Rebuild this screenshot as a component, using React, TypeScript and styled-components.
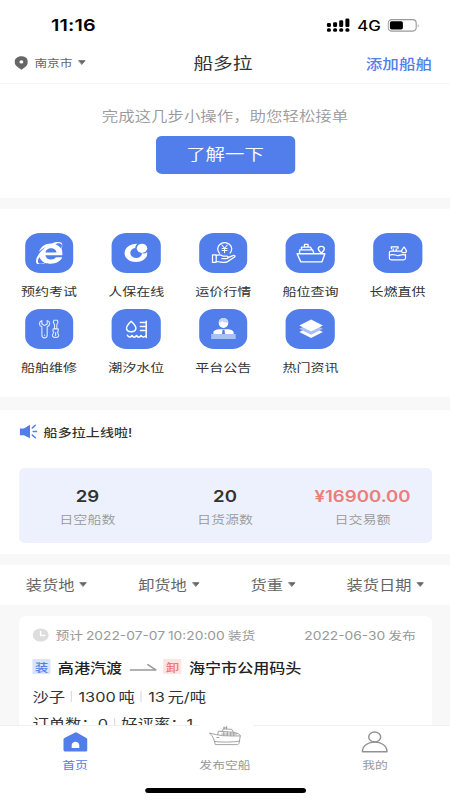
import React from 'react';
import styled, { createGlobalStyle } from 'styled-components';
import { FaInternetExplorer } from 'react-icons/fa';

const BLUE = '#517eea';

const GlobalStyle = createGlobalStyle`
  *, *::before, *::after { box-sizing: border-box; }
  html, body { margin: 0; padding: 0; background: #fff; overflow: hidden; }
`;

/* The 375pt wide design is stretched to fill the 450px viewport. */
const Screen = styled.div`
  width: 375px;
  height: 800px;
  transform: scaleX(1.2);
  transform-origin: 0 0;
  display: flex;
  flex-direction: column;
  overflow: hidden;
  background: #f8f8f8;
  color: #333;
  font-family: Inter, 'Noto Sans CJK SC', sans-serif;
  white-space: nowrap;
`;

const StatusBar = styled.div`
  flex: none;
  height: 42px;
  padding: 8px 25px 0 42.5px;
  display: flex;
  align-items: center;
  justify-content: space-between;
  background: #fff;
  color: #000;
`;
const Clock = styled.span`
  font-size: 16.5px;
  font-weight: 600;
  letter-spacing: 0.1px;
`;
const StatusRight = styled.div`
  display: flex;
  align-items: center;
`;
const Network = styled.span`
  font-size: 14px;
  font-weight: 500;
  margin: 0 6px 0 5.5px;
`;

const Header = styled.header`
  flex: none;
  height: 42px;
  padding: 0 15px 0 11.5px;
  display: grid;
  grid-template-columns: 1fr auto 1fr;
  align-items: center;
  background: #fff;
  border-bottom: 1px solid #f7f7f7;
`;
const City = styled.div`
  display: flex;
  align-items: center;
  font-size: 10.6px;
  color: #666;
`;
const CityName = styled.span`
  margin: 0 4.5px 0 5.5px;
`;
const Title = styled.h1`
  margin: 0;
  padding-bottom: 2px;
  font-size: 16.4px;
  font-weight: 400;
`;
const AddLink = styled.span`
  justify-self: end;
  font-size: 13.8px;
  font-weight: 500;
  color: ${BLUE};
`;

const Promo = styled.section`
  flex: none;
  height: 113.5px;
  padding-top: 20px;
  display: flex;
  flex-direction: column;
  align-items: center;
  background: #fff;
`;
const PromoText = styled.p`
  margin: 0 0 8px;
  font-size: 13.7px;
  line-height: 24px;
  font-weight: 350;
  color: #999;
`;
const PromoButton = styled.button`
  width: 116px;
  height: 37.5px;
  padding: 0 0 3px;
  border: 0;
  border-radius: 5px;
  background: ${BLUE};
  color: #fff;
  font-family: inherit;
  font-size: 16.2px;
  font-weight: 350;
`;

const Menu = styled.section`
  flex: none;
  height: 188px;
  margin-top: 11.5px;
  padding: 24.3px 7.4px 0 4.6px;
  display: grid;
  grid-template-columns: repeat(5, 1fr);
  grid-auto-rows: 75.8px;
  background: #fff;
`;
const MenuItem = styled.div`
  display: flex;
  flex-direction: column;
  align-items: center;
`;
const Tile = styled.div`
  width: 40.6px;
  height: 39.5px;
  border-radius: 12.5px;
  display: flex;
  align-items: center;
  justify-content: center;
  background: ${BLUE};
  color: #fff;
`;
const MenuLabel = styled.span`
  margin-top: 9px;
  font-size: 11.7px;
  line-height: 20px;
`;

const Overview = styled.section`
  flex: none;
  height: 144.5px;
  margin-top: 12.5px;
  padding: 0 15.5px;
  background: #fff;
`;
const Notice = styled.div`
  height: 58.5px;
  padding-bottom: 15px;
  display: flex;
  align-items: center;
  gap: 5px;
  font-size: 11.7px;
  font-weight: 500;
  letter-spacing: 0.05px;
`;
const Stats = styled.div`
  height: 75px;
  padding-top: 17.5px;
  border-radius: 5px;
  display: grid;
  grid-template-columns: repeat(3, 1fr);
  background: #edf1fd;
`;
const Stat = styled.div`
  display: flex;
  flex-direction: column;
  align-items: center;
`;
const StatValue = styled.span<{ $accent?: boolean }>`
  font-size: 15.5px;
  line-height: 22px;
  font-weight: 600;
  color: ${(p) => (p.$accent ? '#ec7d78' : '#333')};
`;
const StatLabel = styled.span`
  margin-top: 2.5px;
  font-size: 11.7px;
  line-height: 20px;
  font-weight: 350;
  color: #999;
`;

const Filters = styled.nav`
  flex: none;
  height: 40px;
  margin-top: 11px;
  padding: 0 21.5px 2px 21.5px;
  display: flex;
  align-items: center;
  justify-content: space-between;
  background: #fff;
  font-size: 13.5px;
  color: #666;
`;
const Filter = styled.div`
  display: flex;
  align-items: center;
  gap: 4px;
`;

const CargoCard = styled.article`
  flex: 1;
  min-height: 0;
  overflow: hidden;
  margin: 11px 15.5px 0;
  padding: 8px 13px 0 11.5px;
  border-radius: 6px 6px 0 0;
  background: #fff;
`;
const CardMeta = styled.div`
  height: 22px;
  display: flex;
  align-items: center;
  font-size: 11.5px;
  word-spacing: -0.8px;
  color: #999;
`;
const LoadTime = styled.span`
  margin-left: 5px;
  margin-right: auto;
`;
const Route = styled.div`
  height: 22px;
  margin-top: 9.5px;
  display: flex;
  align-items: center;
  font-size: 13.4px;
  font-weight: 500;
  color: #222;
`;
const RoutePlace = styled.span`
  margin-right: 6.5px;
`;
const UnloadStop = styled.span`
  margin-left: 5.5px;
  display: flex;
  align-items: center;
`;
const Tag = styled.span<{ $unload?: boolean }>`
  width: 15.2px;
  height: 15px;
  margin-right: 6px;
  display: flex;
  align-items: center;
  justify-content: center;
  font-size: 11px;
  font-weight: 500;
  color: ${(p) => (p.$unload ? '#ef7771' : BLUE)};
  background: ${(p) => (p.$unload ? '#fde3e1' : '#d9e3fb')};
`;
const Details = styled.div<{ $gap: number }>`
  height: 22px;
  margin-top: ${(p) => p.$gap}px;
  display: flex;
  align-items: center;
  font-size: 13.6px;
  word-spacing: -1.6px;
`;
const Divider = styled.i`
  width: 1px;
  height: 11px;
  margin: 0 5.1px;
  background: #ddd;
`;

const TabBar = styled.nav`
  flex: none;
  position: relative;
  height: 75.5px;
  display: grid;
  grid-template-columns: repeat(3, 1fr);
  background: #fff;
  border-top: 1px solid #f0f0f0;
`;
const Bump = styled.span`
  position: absolute;
  left: 160.5px;
  top: -14px;
  width: 54px;
  height: 54px;
  border-radius: 50%;
  background: #fff;
`;
const Tab = styled.div<{ $active?: boolean }>`
  position: relative;
  height: 49px;
  display: flex;
  flex-direction: column;
  align-items: center;
  justify-content: flex-end;
  font-size: 10.7px;
  line-height: 18px;
  color: ${(p) => (p.$active ? BLUE : '#999')};
`;
const TabIcon = styled.div`
  flex: none;
  height: 30px;
  display: flex;
  align-items: center;
`;
const ShipSlot = styled(TabIcon)`
  height: 41px;
  padding-left: 1px;
`;
const HomeIndicator = styled.span`
  position: absolute;
  left: 121px;
  bottom: 7.5px;
  width: 134px;
  height: 5px;
  border-radius: 3px;
  background: #000;
`;

/* Drawings use stretched viewport pixels, so their boxes are 1.2 times narrower. */
type ArtProps = { w: number; h: number; children: React.ReactNode };
const Art = ({ w, h, children }: ArtProps) => (
  <svg
    width={w / 1.2}
    height={h}
    viewBox={`0 0 ${w} ${h}`}
    preserveAspectRatio="none"
    fill="none"
    strokeLinecap="round"
    strokeLinejoin="round"
  >
    {children}
  </svg>
);

const Caret = () => (
  <Art w={8} h={5}><path d="M.8.600h6.400L4 4.300z" fill="#666" stroke="#666" strokeWidth=".7" /></Art>
);

const SignalIcon = () => (
  <Art w={24} h={14}>
    <g fill="#000">
      <rect x="0.5" y="5" width="4" height="4" rx="1.3" />
      <rect x="6.7" y="4.2" width="4" height="4.8" rx="1.3" />
      <rect x="12.8" y="2.2" width="4" height="6.8" rx="1.3" />
      <rect x="19" y="0.5" width="4" height="8.5" rx="1.3" />
      <rect x="0.5" y="10.3" width="4" height="3.4" rx="1.5" />
      <rect x="6.7" y="10.3" width="4" height="3.4" rx="1.5" />
      <rect x="12.8" y="10.3" width="4" height="3.4" rx="1.5" />
      <rect x="19" y="10.3" width="4" height="3.4" rx="1.5" />
    </g>
  </Art>
);

const BatteryIcon = () => (
  <Art w={32} h={13}>
    <rect x="0.6" y="0.6" width="28" height="11.5" rx="3.5" stroke="#999" strokeWidth="1.1" />
    <rect x="2.3" y="2.2" width="13" height="8.4" rx="1.8" fill="#000" />
    <path d="M30.2 4.4q1.6 2 0 4z" fill="#999" />
  </Art>
);

const PinIcon = () => (
  <Art w={14} h={14}>
    <path fillRule="evenodd" d="M7 .3c4 0 6.8 2.5 6.8 5.7S10.5 11.4 7 13.7C3.5 11.4.2 9.2.2 6S3 .3 7 .3zM7 4.2a2 1.7 0 100 3.4 2 1.7 0 000-3.4z" fill="#666" />
  </Art>
);

const InsuranceIcon = () => (
  <Art w={48} h={40}>
    <path d="M26 10.800C18.500 10.600 13 14.600 13 20.200c0 5.200 5 8.800 11.300 8.800 6 0 11.300-3.400 11.300-8.200 0-.7 0-1.100-.2-1.600-1.700 1.200-3.700 1.400-5.200 1.100.2 2.500-2.300 4.700-5.400 4.700-3.500 0-6.100-2.200-6.100-5 0-2.500 2.100-4.600 4.900-4.900C23.700 13.300 24.500 11.800 26 10.800z" fill="#fff" />
    <ellipse cx="30.400" cy="15.300" rx="5.200" ry="4.600" fill="#fff" />
  </Art>
);

const PriceIcon = () => (
  <Art w={48} h={40}>
    <g stroke="#fff" strokeWidth="1.25">
      <path d="M20.300 20.200a7 6.300 0 1110.600-.2" />
      <path d="M22.700 12l2.700 3.200 2.700-3.200M25.400 15.200v4.600M22.900 15.500h5M22.900 17.500h5" strokeWidth="1" />
      <path d="M13.300 21.800h3.700v7.500h-3.700z" />
      <path d="M17 22.500c2.500-1.100 4.600-.8 6.600.5h3.700c2.400 0 2.200 2.600 0 2.600h-4.700M28.400 24.800l5.200-2.200c1.900-.7 3 .6 1.400 1.700l-6.700 4.300c-2 1.100-4.300.9-6.200.6l-5.100-.7" />
    </g>
  </Art>
);

const ShipPositionIcon = () => (
  <Art w={48} h={40}>
    <g stroke="#fff" strokeWidth="1.35">
      <path d="M10.300 20.700h27.800l-3 8.200H14zM12.800 20.500v-3.600h13l1.300 3.700M14.700 16.700v-2.600h8.900l1.500 2.600M17.700 13.900v-2.500h3.500v2.500" />
      <path d="M34.500 20.300c-2-2-3-3.200-3-4.500 0-1.500 1.300-2.500 3-2.500s3 1 3 2.500c0 1.300-1 2.500-3 4.500z" />
    </g>
  </Art>
);

const FuelIcon = () => (
  <Art w={48} h={40}>
    <g stroke="#fff" strokeWidth="1.2">
      <path d="M27.500 18.100H18c-1.200 0-1.800.6-1.800 1.500v5.700c0 .9.600 1.500 1.800 1.500h12.500c1.200 0 1.800-.6 1.800-1.500v-4" />
      <path d="M16.300 22.200c3.200-1.500 5.100-.1 7.600.3 2.800.4 4.500-2 8.200-.4M18.200 15.700v-1.800h6.500v1.800M20 15.800v2M23 15.800v2M18 13.900h7" />
      <path d="M30.800 14c1.600 2 2.400 2.800 2.400 3.900 0 1-1 1.800-2.400 1.800s-2.400-.8-2.400-1.800c0-1.100.8-1.900 2.400-3.900z" />
    </g>
  </Art>
);

const RepairIcon = () => (
  <Art w={48} h={40}>
    <g stroke="#dce5fd" strokeWidth="1.15">
      <path d="M16.700 11.500c-3.300 1.500-3.300 5 0 6.300v8.500c0 3.400 5.300 3.400 5.300 0v-8.500c3.300-1.500 3.300-5 0-6.300v3.600l-2.600 1.300-2.700-1.300z" />
      <path d="M19.400 26v.3M28.700 11.200h3.500l.6 2.300-1.200 2v4.100h-2.300v-4.100l-1.200-2zM28 19.800h5v2.300l-.8 1 1.300 3.300c.4 2.700-6.700 2.700-6.300 0l1.300-3.300-.8-1zM30.400 23.500v3" />
    </g>
  </Art>
);

const TideIcon = () => (
  <Art w={48} h={40}>
    <g stroke="#fff" strokeWidth="1.5">
      <path d="M19.600 12.200c3.200 3 4.700 4.900 4.700 6.900 0 2.200-2 3.700-4.700 3.700s-4.700-1.500-4.700-3.700c0-2 1.500-3.900 4.700-6.900zM34.600 12.300v16.300M28.800 13.500h5.700M28.800 17.500h5.700M28.800 21.500h5.700" />
      <path d="M15.700 26.200c1.500 2.500 3.200 2.500 4.700.3 1.500 2.200 3 2.200 4.500 0 1.500 2.200 3 2.200 4.500 0 1.200 1.900 3 2.200 5 .3" />
    </g>
  </Art>
);

const BulletinIcon = () => (
  <Art w={48} h={40}>
    <ellipse cx="24.300" cy="14" rx="4.800" ry="5" fill="#fff" />
    <path d="M19.500 13.500c0-6 9.600-6 9.600 0-2.700.4-4.700-.2-6-1.300-.8 1-2 1.400-3.600 1.300z" fill="#c5d4fa" />
    <path d="M14.200 25v-1.500c0-2 2.500-3.300 6.800-3.300h6.600c4.300 0 6.800 1.300 6.800 3.300V25z" fill="#fff" />
    <path d="M23.300 20.800h2l.5 4.200h-3z" fill={BLUE} />
    <rect x="12" y="25" width="24.500" height="5" fill="#a9c0f7" />
  </Art>
);

const LayersIcon = () => (
  <Art w={48} h={40}>
    <path d="M12.500 23l11.800-6 11.800 6-11.800 6z" fill="#fff" />
    <path d="M12.500 19.800l11.800-6 11.800 6-11.800 6z" fill="#a9c0f7" />
    <path d="M12.500 16.600l11.800-6 11.800 6-11.800 6z" fill="#fff" />
  </Art>
);

const HornIcon = () => (
  <Art w={19} h={15}>
    <path d="M.7 4.600h4L10.800.700v13.600L4.700 11.200h-4z" fill={BLUE} />
    <path d="M13.100 3.900l3-2.600M14 7.500h3.800M13.100 11.100l3 2.600" stroke={BLUE} strokeWidth="1.5" />
  </Art>
);

const ClockIcon = () => (
  <Art w={17} h={14}>
    <ellipse cx="8.300" cy="7" rx="8" ry="6.600" fill="#ddd" />
    <path d="M8.200 3.500v4h4" stroke="#fff" strokeWidth="1.5" />
  </Art>
);

const RouteArrow = () => (
  <Art w={27} h={10}>
    <path d="M.5 7.900h25.700l-8-5.200" stroke="#999" strokeWidth="1.500" />
  </Art>
);

const HouseIcon = () => (
  <Art w={26} h={20}>
    <path fillRule="evenodd" d="M12.800.5q.8-.3 1.500 0L24 5.900c.7.400 1 .9 1 1.600v10.200c0 1.100-.7 1.800-1.900 1.800H3c-1.200 0-1.900-.7-1.900-1.800V7.500c0-.7.300-1.200 1-1.600zM9.300 16h7.600v-2.700c0-4.700-7.600-4.700-7.600 0z" fill={BLUE} />
  </Art>
);

const ShipIcon = () => (
  <Art w={34} h={20}>
    <g stroke="#999" strokeWidth="0.9">
      <path d="M1 7.200l7 1.500 6 1 17.500.3-1.200 7c-.5 1.300-1 1.600-2.200 1.600H6.500C5.300 13.500 4.200 10 1 7.200zM5.800 15.500c7 1 17 .7 25.100-.3M9 8.500l.6-3.300 3.800.2 1.300-2.600 8.300.6 1.700 2.900 4.900 1.300 2 2.200M12.700 5.500l12 .8M15.200 3v-2M17.800 2.800V.5M15.200 1.800h2.600M15 5.700v3.800M18.500 6v3.700M22 6.300V10M25 6.800V10M8 11.500h2M13 8h15" />
    </g>
  </Art>
);

const UserIcon = () => (
  <Art w={27} h={22}>
    <g stroke="#929292" strokeWidth="1.4">
      <ellipse cx="13.500" cy="6" rx="6" ry="5" />
      <path d="M1.200 20.800c0-13 24.600-13 24.600 0z" />
    </g>
  </Art>
);

const menu = [
  { label: '预约考试', icon: <FaInternetExplorer size={22.5} /> },
  { label: '人保在线', icon: <InsuranceIcon /> },
  { label: '运价行情', icon: <PriceIcon /> },
  { label: '船位查询', icon: <ShipPositionIcon /> },
  { label: '长燃直供', icon: <FuelIcon /> },
  { label: '船舶维修', icon: <RepairIcon /> },
  { label: '潮汐水位', icon: <TideIcon /> },
  { label: '平台公告', icon: <BulletinIcon /> },
  { label: '热门资讯', icon: <LayersIcon /> },
];

const stats = [
  { value: '29', label: '日空船数' },
  { value: '20', label: '日货源数' },
  { value: '¥16900.00', label: '日交易额', accent: true },
];

export default function App() {
  return (
    <>
      <GlobalStyle />
      <Screen>
        <StatusBar>
          <Clock>11:16</Clock>
          <StatusRight>
            <SignalIcon />
            <Network>4G</Network>
            <BatteryIcon />
          </StatusRight>
        </StatusBar>
        <Header>
          <City><PinIcon /><CityName>南京市</CityName><Caret /></City>
          <Title>船多拉</Title>
          <AddLink>添加船舶</AddLink>
        </Header>
        <Promo>
          <PromoText>完成这几步小操作，助您轻松接单</PromoText>
          <PromoButton>了解一下</PromoButton>
        </Promo>
        <Menu>
          {menu.map((m) => (
            <MenuItem key={m.label}>
              <Tile>{m.icon}</Tile>
              <MenuLabel>{m.label}</MenuLabel>
            </MenuItem>
          ))}
        </Menu>
        <Overview>
          <Notice><HornIcon />船多拉上线啦!</Notice>
          <Stats>
            {stats.map((s) => (
              <Stat key={s.label}>
                <StatValue $accent={s.accent}>{s.value}</StatValue>
                <StatLabel>{s.label}</StatLabel>
              </Stat>
            ))}
          </Stats>
        </Overview>
        <Filters>
          {['装货地', '卸货地', '货重', '装货日期'].map((f) => (
            <Filter key={f}>{f}<Caret /></Filter>
          ))}
        </Filters>
        <CargoCard>
          <CardMeta>
            <ClockIcon />
            <LoadTime>预计 2022-07-07 10:20:00 装货</LoadTime>
            <span>2022-06-30 发布</span>
          </CardMeta>
          <Route>
            <Tag>装</Tag>
            <RoutePlace>高港汽渡</RoutePlace>
            <RouteArrow />
            <UnloadStop><Tag $unload>卸</Tag>海宁市公用码头</UnloadStop>
          </Route>
          <Details $gap={7.5}>沙子<Divider />1300 吨<Divider />13 元/吨</Details>
          <Details $gap={5}>订单数：0<Divider />好评率：1</Details>
        </CargoCard>
        <TabBar>
          <Bump />
          <Tab $active><TabIcon><HouseIcon /></TabIcon>首页</Tab>
          <Tab><ShipSlot><ShipIcon /></ShipSlot>发布空船</Tab>
          <Tab><TabIcon><UserIcon /></TabIcon>我的</Tab>
          <HomeIndicator />
        </TabBar>
      </Screen>
    </>
  );
}
